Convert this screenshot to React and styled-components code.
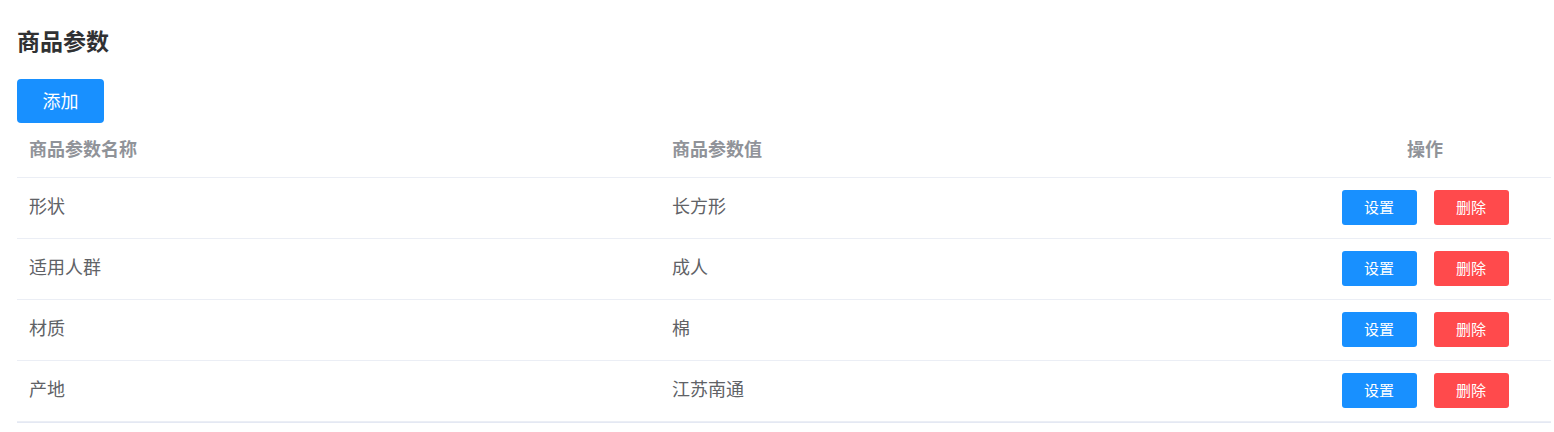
import styled, { createGlobalStyle } from 'styled-components'

const GlobalStyle = createGlobalStyle`
  body {
    margin: 0;
    background: #fff;
    font-family: "Noto Sans CJK SC", "Noto Sans", sans-serif;
  }
`

const StyledPage = styled.div`
  padding: 24px 3px 0 17px;
`

const StyledTitle = styled.h2`
  margin: 0;
  font-size: 23px;
  line-height: 32px;
  font-weight: 700;
  color: #303133;
`

const StyledAddButton = styled.button`
  margin-top: 23px;
  width: 87px;
  height: 44px;
  padding: 0 0 2px;
  border: none;
  border-radius: 4px;
  background-color: #1890ff;
  color: #fff;
  font-family: inherit;
  font-size: 18px;
  cursor: pointer;
`

const StyledTable = styled.div`
  display: grid;
  grid-template-columns: 643px 643px 1fr;
  border-bottom: 1px solid #e4e8f3;
`

const StyledHeadCell = styled.div`
  box-sizing: border-box;
  height: 55px;
  display: flex;
  align-items: center;
  justify-content: ${props => (props.center ? 'center' : 'flex-start')};
  padding: ${props => (props.center ? '0 14px 5px 10px' : '0 12px 5px')};
  border-bottom: 1px solid #ebeef5;
  font-size: 18px;
  font-weight: 700;
  color: #909399;
`

const StyledCell = styled.div`
  box-sizing: border-box;
  height: 61px;
  display: flex;
  align-items: center;
  justify-content: ${props => (props.actions ? 'center' : 'flex-start')};
  gap: 17px;
  padding: ${props => (props.actions ? '0 14px 1px 10px' : '0 12px 6px')};
  border-bottom: 1px solid #ebeef5;
  font-size: 18px;
  color: #606266;
`

const StyledRowButton = styled.button`
  width: 75px;
  height: 35px;
  padding: 0 0 2px;
  border: none;
  border-radius: 3px;
  background-color: ${props => (props.danger ? '#ff4a4c' : '#1890ff')};
  color: #fff;
  font-family: inherit;
  font-size: 15px;
  cursor: pointer;
`

const params = [
  { name: '形状', value: '长方形' },
  { name: '适用人群', value: '成人' },
  { name: '材质', value: '棉' },
  { name: '产地', value: '江苏南通' },
]

export default () => {
  return (
    <StyledPage>
      <GlobalStyle />
      <StyledTitle>商品参数</StyledTitle>
      <StyledAddButton>添加</StyledAddButton>

      <StyledTable>
        <StyledHeadCell>商品参数名称</StyledHeadCell>
        <StyledHeadCell>商品参数值</StyledHeadCell>
        <StyledHeadCell center>操作</StyledHeadCell>

        {params.map(p => (
          <>
            <StyledCell key={p.name + '-n'}>{p.name}</StyledCell>
            <StyledCell key={p.name + '-v'}>{p.value}</StyledCell>
            <StyledCell key={p.name + '-a'} actions>
              <StyledRowButton>设置</StyledRowButton>
              <StyledRowButton danger>删除</StyledRowButton>
            </StyledCell>
          </>
        ))}
      </StyledTable>
    </StyledPage>
  )
}
